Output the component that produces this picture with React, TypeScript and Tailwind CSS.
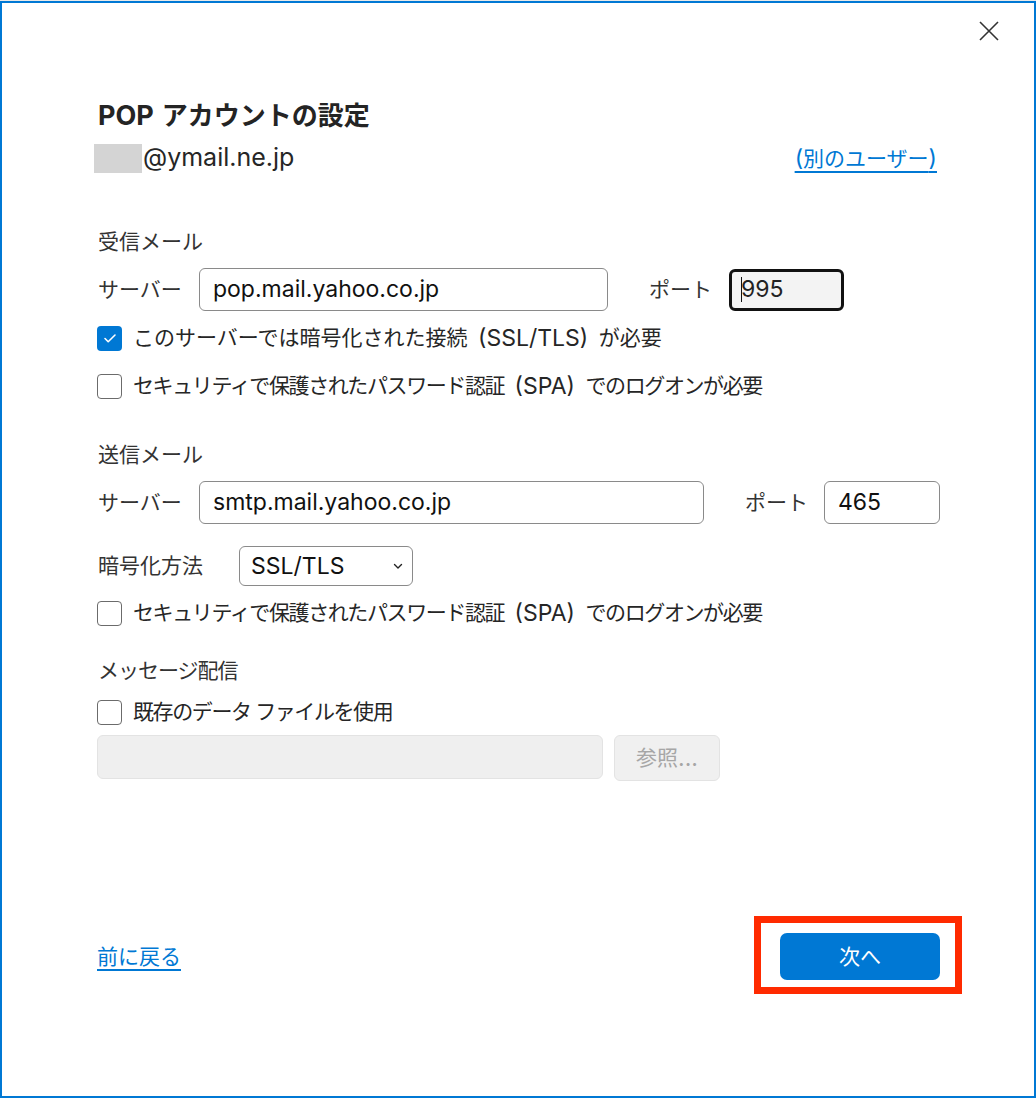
import * as React from 'react';

const font = { fontFamily: 'Inter, "Noto Sans CJK JP", sans-serif' };

// Latin runs are set a little larger than the kana/kanji, as in the Windows UI font
function Mixed({ text }: { text: string }) {
    const parts = text.split(/([\x00-\x7F]+)/).filter(Boolean);
    return (
        <>
            {parts.map((p, i) => {
                if (/^ +$/.test(p)) return <span key={i} className="whitespace-pre"> </span>;
                if (/^[\x00-\x7F]+$/.test(p)) {
                    return <span key={i} className="whitespace-pre px-[4px] text-[23px] tracking-normal">{p}</span>;
                }
                return <span key={i}>{p}</span>;
            })}
        </>
    );
}

function Checkbox({ checked = false, tight = false, label }: { checked?: boolean; tight?: boolean; label: string }) {
    return (
        <div className="flex h-[30px] items-center whitespace-nowrap">
            {checked ? (
                <span className="ml-[-1px] flex h-[25px] w-[25px] shrink-0 items-center justify-center rounded-[4px] bg-[#0078d4]">
                    <svg width="14" height="14" viewBox="0 0 14 14" fill="none">
                        <path d="M2 7.5l3.2 3.2L12 4" stroke="white" strokeWidth="1.6" strokeLinecap="round" strokeLinejoin="round" />
                    </svg>
                </span>
            ) : (
                <span className="ml-[-1px] h-[25px] w-[25px] shrink-0 rounded-[4px] border-[1.5px] border-[#6b6b6b] bg-white" />
            )}
            <span className={`ml-[11px] flex items-center text-[21px] text-[#262626] ${tight ? 'tracking-[-1.4px]' : ''}`}>
                <Mixed text={label} />
            </span>
        </div>
    );
}

function TextBox({ value, className }: { value: string; className: string }) {
    return (
        <div className={`flex shrink-0 items-center rounded-[6px] border border-[#8a8a8a] bg-white pl-[13px] text-[23px] text-[#111] ${className}`}>
            {value}
        </div>
    );
}

export default function App() {
    return (
        <div className="h-[1098px] w-[1036px] bg-[#e9e9e9] pt-[1px]" style={font}>
            <div className="flex h-[1097px] flex-col border-2 border-[#0078d4] bg-white">
                {/* close */}
                <div className="flex justify-end pr-[35px] pt-[18px]">
                    <svg width="20" height="20" viewBox="0 0 20 20">
                        <path d="M1 1L19 19M19 1L1 19" stroke="#333" strokeWidth="1.6" />
                    </svg>
                </div>

                <div className="flex flex-col whitespace-nowrap pl-[96px] pr-[94px]">
                    <h1 className="mt-[58px] flex h-[34px] items-center text-[26px] font-bold leading-[34px] text-[#242424]">
                        <span className="mr-[8px] text-[27px]">POP</span>アカウントの設定
                    </h1>

                    <div className="mt-[10px] flex h-[30px] items-center justify-between">
                        <div className="flex items-center">
                            <span className="ml-[-4px] h-[29px] w-[48px] bg-[#d4d4d4]" />
                            <span className="ml-[1px] text-[25px] text-[#262626]">@ymail.ne.jp</span>
                        </div>
                        <a href="#" className="mr-[3px] text-[21px] text-[#0078d4] underline underline-offset-[5px]">
                            <span className="text-[23px]">(</span>別のユーザー<span className="text-[23px]">)</span>
                        </a>
                    </div>

                    <div className="mt-[54px] h-[30px] text-[21px] leading-[30px] text-[#333]">受信メール</div>

                    <div className="mt-[11px] flex h-[43px] items-center">
                        <span className="w-[101px] shrink-0 text-[21px] text-[#333]">サーバー</span>
                        <TextBox value="pop.mail.yahoo.co.jp" className="h-[43px] w-[409px]" />
                        <span className="ml-[41px] w-[80px] shrink-0 text-[21px] text-[#333]">ポート</span>
                        <div className="flex h-[42px] w-[115px] shrink-0 items-center rounded-[6px] border-[3px] border-[#111] bg-[#f3f3f3] pl-[9px] text-[23px] text-[#222]">
                            <span className="mr-[-1px] h-[25px] w-[1px] bg-[#111]" />
                            995
                        </div>
                    </div>

                    <div className="mt-[12px]">
                        <Checkbox checked label="このサーバーでは暗号化された接続 (SSL/TLS) が必要" />
                    </div>
                    <div className="mt-[18px]">
                        <Checkbox tight label="セキュリティで保護されたパスワード認証 (SPA) でのログオンが必要" />
                    </div>

                    <div className="mt-[39px] h-[30px] text-[21px] leading-[30px] text-[#333]">送信メール</div>

                    <div className="mt-[11px] flex h-[43px] items-center">
                        <span className="w-[101px] shrink-0 text-[21px] text-[#333]">サーバー</span>
                        <TextBox value="smtp.mail.yahoo.co.jp" className="h-[43px] w-[505px]" />
                        <span className="ml-[41px] w-[79px] shrink-0 text-[21px] text-[#333]">ポート</span>
                        <TextBox value="465" className="h-[43px] w-[116px]" />
                    </div>

                    <div className="mt-[22px] flex h-[40px] items-center">
                        <span className="w-[141px] shrink-0 text-[21px] text-[#333]">暗号化方法</span>
                        <div className="flex h-[40px] w-[174px] shrink-0 items-center justify-between rounded-[6px] border border-[#8a8a8a] bg-white pl-[11px] pr-[9px] text-[23px] text-[#111]">
                            SSL/TLS
                            <svg width="10" height="10" viewBox="0 0 10 10" fill="none">
                                <path d="M1.5 3.5L5 7l3.5-3.5" stroke="#222" strokeWidth="1.4" strokeLinecap="round" strokeLinejoin="round" />
                            </svg>
                        </div>
                    </div>

                    <div className="mt-[12px]">
                        <Checkbox tight label="セキュリティで保護されたパスワード認証 (SPA) でのログオンが必要" />
                    </div>

                    <div className="mt-[28px] h-[30px] text-[21px] leading-[30px] tracking-[-1px] text-[#333]">メッセージ配信</div>

                    <div className="mt-[11px]">
                        <Checkbox tight label="既存のデータ ファイルを使用" />
                    </div>

                    <div className="mt-[8px] flex h-[44px] items-stretch">
                        <div className="ml-[-1px] w-[506px] shrink-0 rounded-[6px] border border-[#e3e3e3] bg-[#efefef]" />
                        <div className="ml-[11px] flex h-[46px] w-[106px] shrink-0 items-center justify-center rounded-[6px] border border-[#e3e3e3] bg-[#f0f0f0] text-[21px] text-[#a6a6a6]">
                            参照<span className="text-[23px]">...</span>
                        </div>
                    </div>

                    {/* footer */}
                    <div className="mt-[154px] flex h-[47px] items-center justify-between">
                        <a href="#" className="ml-[-1px] text-[21px] text-[#0078d4] underline underline-offset-[5px]">
                            前に戻る
                        </a>
                        <div className="relative">
                            <button className="h-[47px] w-[160px] rounded-[7px] bg-[#0078d4] text-[21px] text-white">
                                次へ
                            </button>
                            <div className="pointer-events-none absolute bottom-[-14px] left-[-26px] right-[-22px] top-[-17px] border-[7px] border-[#ff2a00]" />
                        </div>
                    </div>
                </div>
            </div>
        </div>
    );
}
